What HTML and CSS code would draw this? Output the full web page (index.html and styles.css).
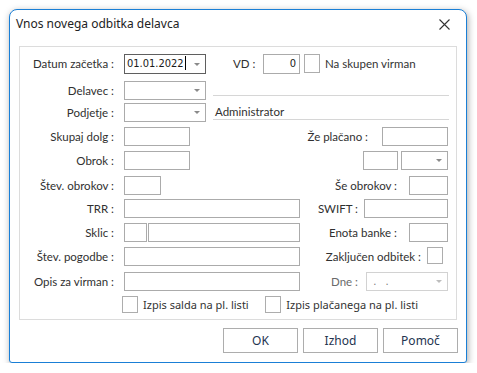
FILE: index.html
```html
<!DOCTYPE html>
<html lang="sl">
<head>
    <meta charset="UTF-8">
    <title>Vnos novega odbitka delavca</title>
    <link rel="stylesheet" href="styles.css">
</head>
<body>
    <div class="window">
        <div class="titlebar">
            <span class="title">Vnos novega odbitka delavca</span>
            <svg class="close" width="11" height="11" viewBox="0 0 11 11">
                <path d="M0.5 0.5 L10.5 10.5 M10.5 0.5 L0.5 10.5" stroke="#333" stroke-width="1.1" fill="none"/>
            </svg>
        </div>

        <div class="group">
            <div class="row r1">
                <span class="lbl">Datum začetka :</span>
                <div class="field combo focus w82"><span class="val">01.01.2022</span><span class="caret"></span><span class="arrow"></span></div>
                <span class="lbl-vd">VD :</span>
                <div class="field num w37">0</div>
                <span class="check chk-vd"></span>
                <span class="check-text">Na skupen virman</span>
            </div>

            <div class="row r2">
                <span class="lbl">Delavec :</span>
                <div class="field combo w82"><span class="arrow"></span></div>
                <div class="rule"></div>
            </div>

            <div class="row r3">
                <span class="lbl">Podjetje :</span>
                <div class="field combo w82"><span class="arrow"></span></div>
                <div class="rule rule-text">Administrator</div>
            </div>

            <div class="row">
                <span class="lbl">Skupaj dolg :</span>
                <div class="field w66"></div>
                <span class="rlbl gap14">Že plačano :</span>
                <div class="field w66"></div>
            </div>

            <div class="row r5">
                <span class="lbl">Obrok :</span>
                <div class="field w66"></div>
                <div class="field w35 push"></div>
                <div class="field combo w47 gap-l3"><span class="arrow"></span></div>
            </div>

            <div class="row r6">
                <span class="lbl">Štev. obrokov :</span>
                <div class="field w37"></div>
                <span class="rlbl gap12">Še obrokov :</span>
                <div class="field w39"></div>
            </div>

            <div class="row">
                <span class="lbl">TRR :</span>
                <div class="field w176"></div>
                <span class="rlbl gap6">SWIFT :</span>
                <div class="field w84"></div>
            </div>

            <div class="row">
                <span class="lbl">Sklic :</span>
                <div class="field w23"></div>
                <div class="field w152 gap-l1"></div>
                <span class="rlbl gap12">Enota banke :</span>
                <div class="field w39"></div>
            </div>

            <div class="row r9">
                <span class="lbl">Štev. pogodbe :</span>
                <div class="field w176"></div>
                <span class="rlbl gap6">Zaključen odbitek :</span>
                <span class="check chk-end"></span>
            </div>

            <div class="row">
                <span class="lbl">Opis za virman :</span>
                <div class="field w176"></div>
                <span class="rlbl gap8 muted">Dne :</span>
                <div class="field combo disabled w82"><span class="val dots">&nbsp;.&nbsp;&nbsp;.</span><span class="arrow"></span></div>
            </div>

            <div class="row r11">
                <span class="check chk-left"></span>
                <span class="check-text">Izpis salda na pl. listi</span>
                <span class="check chk-right"></span>
                <span class="check-text">Izpis plačanega na pl. listi</span>
            </div>
        </div>

        <div class="buttons">
            <div class="btn">OK</div>
            <div class="btn">Izhod</div>
            <div class="btn">Pomoč</div>
        </div>
    </div>
</body>
</html>
```

FILE: styles.css
```css
/* okno */
body {
    margin: 0;
    background: #fff;
    font-family: Lato, "Noto Sans", sans-serif;
    font-size: 11.5px;
    color: #303030;
}
.window {
    box-sizing: border-box;
    margin: 9px 0 0 9px;
    width: 458px;
    height: 354px;
    border: 1px solid #1a7fd6;
    border-radius: 8px 8px 3px 3px;
    background: #fff;
    box-shadow: 1px 2px 7px rgba(0, 0, 0, 0.35);
}
.titlebar {
    display: flex;
    align-items: flex-start;
    height: 36px;
    padding-left: 6px;
}
.title {
    margin-top: 4px;
    line-height: 20px;
    font-family: "Noto Sans", sans-serif;
    font-size: 12px;
    color: #222;
}
.close {
    margin: 9px 16px 0 auto;
}

/* skupina */
.group {
    box-sizing: border-box;
    height: 274px;
    margin: 0 9px;
    padding: 7px 8px 0 0;
    border: 1px solid #dcdcdc;
}
.row {
    display: flex;
    align-items: flex-start;
    height: 24px;
}
.r1 { height: 27px; }
.r2 { height: 22px; }
.r5 { height: 25px; }
.r6 { height: 23px; }
.r9 { height: 25px; }
.r11 { height: 17px; }

.lbl {
    width: 94px;
    margin-right: 10px;
    text-align: right;
    line-height: 19px;
    white-space: nowrap;
}
.r1 .lbl { line-height: 20px; }
.rlbl {
    margin-left: auto;
    line-height: 19px;
    white-space: nowrap;
}
.gap6 { margin-right: 6px; }
.gap8 { margin-right: 8px; }
.gap12 { margin-right: 12px; }
.gap14 { margin-right: 14px; }
.muted { color: #6a6a6a; }

/* polja */
.field {
    box-sizing: border-box;
    position: relative;
    height: 19px;
    border: 1px solid #ababab;
    background: #fff;
    font-family: "DejaVu Sans Condensed", "DejaVu Sans", sans-serif;
    font-size: 11px;
    line-height: 17px;
    color: #1a1a1a;
}
.focus {
    height: 20px;
    border-color: #5f5f5f;
    line-height: 18px;
}
.disabled { border-color: #d2d2d2; }
.w23 { width: 23px; }
.w35 { width: 35px; }
.w37 { width: 37px; }
.w39 { width: 39px; }
.w47 { width: 47px; }
.w66 { width: 66px; }
.w82 { width: 82px; }
.w84 { width: 84px; }
.w152 { width: 152px; }
.w176 { width: 176px; }
.push { margin-left: auto; }
.gap-l1 { margin-left: 1px; }
.gap-l3 { margin-left: 3px; }
.num {
    height: 20px;
    text-align: right;
    padding-right: 3px;
    line-height: 18px;
}
.val { padding-left: 2px; }
.dots { color: #777; letter-spacing: 1px; }
.caret {
    display: inline-block;
    width: 1px;
    height: 14px;
    margin-left: 1px;
    background: #000;
    vertical-align: -3px;
}
/* puščica spustnega seznama */
.arrow {
    position: absolute;
    right: 5px;
    top: 7px;
    width: 0;
    height: 0;
    border-top: 3px solid #8a8a8a;
    border-left: 3.5px solid transparent;
    border-right: 3.5px solid transparent;
}
.focus .arrow { top: 8px; }
.disabled .arrow { border-top-color: #bdbdbd; }

.lbl-vd {
    margin-left: 27px;
    width: 30px;
    line-height: 20px;
}
.rule {
    flex: 1;
    height: 14px;
    margin-left: 7px;
    margin-right: -1px;
    border-bottom: 1px solid #d6d6d6;
}
.rule-text {
    height: 16px;
    padding-left: 2px;
    line-height: 18px;
}

/* potrditvena polja */
.check {
    box-sizing: border-box;
    width: 16px;
    height: 17px;
    border: 1px solid #adadad;
    background: #fff;
}
.chk-vd { margin-left: 4px; height: 19px; }
.chk-end { margin-right: 5px; }
.chk-left { margin-left: 102px; }
.chk-right { margin-left: auto; }
.check-text {
    margin-left: 5px;
    line-height: 18px;
    font-family: "Noto Sans", sans-serif;
    font-size: 11px;
    color: #333;
    white-space: nowrap;
}
.r1 .check-text { line-height: 20px; font-family: inherit; font-size: 11.5px; }
.r11 .check-text:last-child { margin-right: 30px; }

/* gumbi */
.buttons {
    display: flex;
    justify-content: flex-end;
    gap: 5px;
    margin-top: 8px;
    padding-right: 8px;
}
.btn {
    box-sizing: border-box;
    width: 75px;
    height: 25px;
    border: 1px solid #adadad;
    text-align: center;
    line-height: 23px;
    font-family: "Noto Sans", sans-serif;
    font-size: 12px;
    color: #243450;
}
```
